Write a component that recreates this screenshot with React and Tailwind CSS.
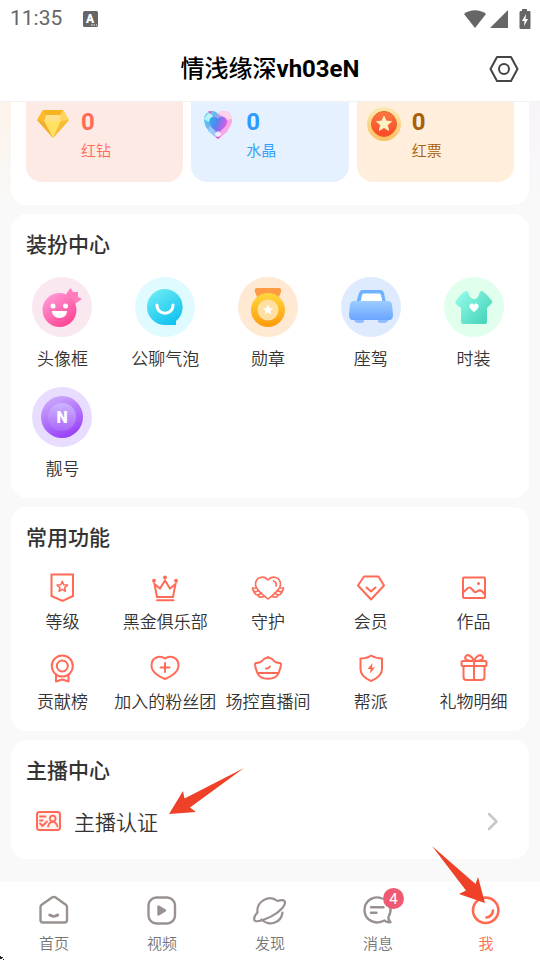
import { useState } from "react";

const STAR = "M0 -10L2.7 -3.7L9.5 -3.1L4.3 1.4L5.9 8.1L0 4.5L-5.9 8.1L-4.3 1.4L-9.5 -3.1L-2.7 -3.7Z";

function LineIcon({ children, width = 2 }) {
  return (
    <svg
      viewBox="0 0 32 32"
      className="h-8 w-8 overflow-visible"
      fill="none"
      stroke="currentColor"
      strokeWidth={width}
      strokeLinecap="round"
      strokeLinejoin="round"
      aria-hidden="true"
    >
      {children}
    </svg>
  );
}

const balances = [
  {
    label: "红钻",
    value: 0,
    style: "bg-[#feeae5] text-[#ff6b57]",
    icon: (
      <svg viewBox="0 0 36 36" className="h-9 w-9" aria-hidden="true">
        <path d="M8 4H28L34 14L18 32L2 14Z" fill="#fcc63a" />
        <path d="M8 4H28L25 9H11Z" fill="#f6b51e" />
        <path d="M11 9H25L26 15H9Z" fill="#ffe08a" />
        <path d="M9 15H26L18 32Z" fill="#ffe262" />
        <path d="M2 14L9 15L18 32Z" fill="#f2ae2c" />
        <path d="M34 14L26 15L18 32Z" fill="#f8bb35" />
        <path d="M8 4L11 9L9 15L2 14Z" fill="#fdbb2d" />
        <path d="M28 4L25 9L26 15L34 14Z" fill="#ffd35d" />
      </svg>
    ),
  },
  {
    label: "水晶",
    value: 0,
    style: "bg-[#e5f1fe] text-[#2b9cff]",
    icon: (
      <svg viewBox="0 0 36 36" className="h-9 w-9" aria-hidden="true">
        <defs>
          <linearGradient id="crystal" x1="0" y1="0" x2="1" y2="0.6">
            <stop offset="0" stopColor="#7fd8f5" />
            <stop offset="0.3" stopColor="#5bbcf2" />
            <stop offset="0.6" stopColor="#f08be6" />
            <stop offset="1" stopColor="#ffb8e4" />
          </linearGradient>
          <linearGradient id="crystalCore" x1="0" y1="0.2" x2="1" y2="0.5">
            <stop offset="0" stopColor="#28b4f0" />
            <stop offset="0.45" stopColor="#5f7df0" />
            <stop offset="1" stopColor="#ea58e6" />
          </linearGradient>
        </defs>
        <path d="M18 8C15 3 5 4 4 13C3.500 21 11 28 18 33C25 28 33 21 32 13C31 4 21 3 18 8Z" fill="url(#crystal)" />
        <path d="M18 8C21 3 31 4 32 13L26 14L22 10Z" fill="#ffd3ea" />
        <path d="M4 13L9 6L13 10L9 16Z" fill="#b9f2f5" />
        <path d="M18 13C16 9.500 9 10 9.500 16C10 21 15 24.500 18 27C21 24.500 26.500 21 27 16C27 10 20 9.500 18 13Z" fill="url(#crystalCore)" />
        <path d="M9.500 20L14 24L18 33L8 25Z" fill="#8fd0fa" />
        <path d="M27 20L22 24L18 33L28 25Z" fill="#f7a8ea" />
        <path d="M14.500 28L18 25L21.500 28L18 31.500Z" fill="#f2ecff" />
        <path d="M8 5.500L12 5L10 8Z" fill="#f64fc6" />
        <path d="M15.500 31L18 33L21 30.500Z" fill="#f64fc6" />
      </svg>
    ),
  },
  {
    label: "红票",
    value: 0,
    style: "bg-[#feeedb] text-[#a85f08]",
    icon: (
      <svg viewBox="0 0 36 36" className="h-9 w-9" aria-hidden="true">
        <defs>
          <linearGradient id="ticketRim" x1="0" y1="0" x2="0" y2="1">
            <stop offset="0" stopColor="#fdeab2" />
            <stop offset="1" stopColor="#fdc062" />
          </linearGradient>
          <linearGradient id="ticketFace" x1="0" y1="0" x2="0" y2="1">
            <stop offset="0" stopColor="#fd7a42" />
            <stop offset="1" stopColor="#fb4726" />
          </linearGradient>
        </defs>
        <circle cx="18" cy="18" r="17" fill="url(#ticketRim)" />
        <circle cx="18" cy="18" r="12.500" fill="url(#ticketFace)" stroke="#e8632a" />
        <path d={STAR} transform="translate(18 18) scale(0.8)" fill="#fff2c4" stroke="#fff2c4" strokeLinejoin="round" />
      </svg>
    ),
  },
];

const dressItems = [
  {
    label: "头像框",
    icon: (
      <>
        <defs>
          <linearGradient id="face" x1="0.1" y1="0" x2="0.8" y2="1">
            <stop offset="0" stopColor="#ff9fdd" />
            <stop offset="1" stopColor="#ff3f8e" />
          </linearGradient>
        </defs>
        <circle cx="30" cy="30" r="30" fill="#fae8f0" />
        <path d="M34 17L38.500 11L41 15L46 15L46 20L50 22L43 27Z" fill="#ff7dbd" />
        <circle cx="27.500" cy="33" r="17" fill="url(#face)" />
        <circle cx="21" cy="29" r="2.500" fill="#fff" />
        <circle cx="33.500" cy="29" r="2.500" fill="#fff" />
        <path d="M20 34H35C35 38 32 41 27.500 41C23 41 20 38 20 34Z" fill="#fff" />
      </>
    ),
  },
  {
    label: "公聊气泡",
    icon: (
      <>
        <defs>
          <linearGradient id="bubble" x1="0.2" y1="0" x2="0.8" y2="1">
            <stop offset="0" stopColor="#6cebf5" />
            <stop offset="1" stopColor="#0cc0f0" />
          </linearGradient>
        </defs>
        <circle cx="30" cy="30" r="30" fill="#dffbff" />
        <path d="M30 12A18 18 0 1 0 30 48H41V44A18 18 0 0 0 30 12Z" fill="url(#bubble)" />
        <path d="M22 28C22 39 38 39 38 28" fill="none" stroke="#fff" strokeWidth="3" strokeLinecap="round" />
      </>
    ),
  },
  {
    label: "勋章",
    icon: (
      <>
        <defs>
          <linearGradient id="medal" x1="0" y1="0" x2="0" y2="1">
            <stop offset="0" stopColor="#ffd83f" />
            <stop offset="1" stopColor="#ff9a0c" />
          </linearGradient>
        </defs>
        <circle cx="30" cy="30" r="30" fill="#ffe9d3" />
        <path d="M19 11H41C43 11 43.500 13 43 15L41 20H19L17 15C16.500 13 17 11 19 11Z" fill="#ff9a45" />
        <circle cx="30" cy="33" r="17" fill="url(#medal)" />
        <circle cx="30" cy="33" r="10.500" fill="#ffe0a0" />
        <path d={STAR} transform="translate(30 33) scale(0.55)" fill="#fff" />
      </>
    ),
  },
  {
    label: "座驾",
    icon: (
      <>
        <defs>
          <linearGradient id="car" x1="0" y1="0" x2="0" y2="1">
            <stop offset="0" stopColor="#9dccff" />
            <stop offset="1" stopColor="#6aa5ff" />
          </linearGradient>
        </defs>
        <circle cx="30" cy="30" r="30" fill="#deebff" />
        <path d="M13 41H23V44C23 46 21 46 18 46C15 46 13 45 13 41ZM37 41H48V42C47 45 45 46 42 46C39 46 37 46 37 44Z" fill="#92bcff" />
        <path d="M15 26L18 16C19 13.500 20 13 23 13H38C41 13 42 13.500 43 16L45 26Z" fill="#6fb2ff" />
        <path d="M19.500 25L21 18C21.500 17 22 16.500 23 16.500H38C39 16.500 39.500 17 40 18L41.500 25Z" fill="#fff" />
        <path d="M13 24H47C49.500 24 50.500 25 51 28L52 37C52 41 51 43 48 43H12C9 43 8 41 8 37L9 28C9.500 25 10.500 24 13 24Z" fill="url(#car)" />
      </>
    ),
  },
  {
    label: "时装",
    icon: (
      <>
        <defs>
          <linearGradient id="shirt" x1="0" y1="0.2" x2="1" y2="1">
            <stop offset="0" stopColor="#93fae8" />
            <stop offset="1" stopColor="#3ccfb4" />
          </linearGradient>
        </defs>
        <circle cx="30" cy="30" r="30" fill="#e1ffed" />
        <path d="M22 14C23 14 24 14.500 24.500 16C26 24 34 24 35.500 16C36 14.500 37 14 38 14C40 14.500 46 21 48 24C48.500 25 48 26 47 27L43 31V44C43 46 42.500 47 41 47H19C17.500 47 17 46 17 44V31L13 28C11 26.500 11 25 12 24C14 20 18 16 22 14Z" fill="url(#shirt)" />
        <path d="M30 28C28 25 25 27 25.500 30C26 32 28 33 30 35C32 33 34 32 34.500 30C35 27 32 25 30 28Z" fill="#fff" />
      </>
    ),
  },
  {
    label: "靓号",
    icon: (
      <>
        <defs>
          <linearGradient id="number" x1="0.3" y1="0" x2="0.7" y2="1">
            <stop offset="0" stopColor="#cba8fb" />
            <stop offset="1" stopColor="#963df9" />
          </linearGradient>
          <linearGradient id="numberFace" x1="0" y1="0" x2="0" y2="1">
            <stop offset="0" stopColor="#cdb4ff" />
            <stop offset="1" stopColor="#ab68f8" />
          </linearGradient>
        </defs>
        <circle cx="30" cy="30" r="30" fill="#e9ddff" />
        <circle cx="30" cy="30" r="21" fill="url(#number)" />
        <circle cx="30" cy="30" r="14" fill="url(#numberFace)" />
        <text x="30" y="36" textAnchor="middle" fill="#fff" className="text-base font-black">
          N
        </text>
      </>
    ),
  },
];

const tools = [
  {
    label: "等级",
    icon: (
      <LineIcon>
        <path d="M5.500 2.500H27V24L16.500 29L5.500 24Z" strokeLinejoin="miter" />
        <path d={STAR} transform="translate(16.3 14.8) scale(0.55)" strokeWidth="2.700" />
      </LineIcon>
    ),
  },
  {
    label: "黑金俱乐部",
    icon: (
      <LineIcon>
        <path d="M5.500 12L8 25H24L26.500 12L21 16.500L16 8.500L11 16.500Z" strokeLinejoin="miter" />
        <path d="M8 28.300H24.500" />
        <g fill="currentColor" stroke="none">
          <circle cx="5" cy="8.700" r="1.900" />
          <circle cx="16" cy="5.300" r="1.900" />
          <circle cx="27" cy="8.700" r="1.900" />
        </g>
      </LineIcon>
    ),
  },
  {
    label: "守护",
    icon: (
      <LineIcon width={1.6}>
        <path d="M16 8C12 3 3.500 5 3.500 12.500C3.500 18 11 23 16 27C21 23 28.500 18 28.500 12.500C28.500 5 20 3 16 8Z" />
        <path d="M21.500 9C23.500 9.500 24.800 11.500 24 14" />
        <path d="M4 16H0.500C0.500 18 1.500 19.500 3.500 20C2.500 20 2 20 2 20.500C3 22.500 4.500 23 6 23C5.500 24.500 8.500 26 12 24.500M3.500 20L7 18.500M6 23L9.500 21" />
        <path d="M28 16H31.500C31.500 18 30.500 19.500 28.500 20C29.500 20 30 20 30 20.500C29 22.500 27.500 23 26 23C26.500 24.500 23.500 26 20 24.500M28.500 20L25 18.500M26 23L22.500 21" />
      </LineIcon>
    ),
  },
  {
    label: "会员",
    icon: (
      <LineIcon>
        <path d="M9 4.500H23.500L29 13.500L16 27.500L3 13.500Z" />
        <path d="M11.500 15.500L16 19.500L20.500 15.500" />
      </LineIcon>
    ),
  },
  {
    label: "作品",
    icon: (
      <LineIcon>
        <rect x="5" y="5.500" width="22" height="20.500" rx="1" />
        <path d="M5.500 20L10 16C11 15.200 12 15.300 13 16.300L16 19.500C17 20.300 18 20.300 19 19.500C21 18 22.500 18 24 19.300L26.500 22" />
        <circle cx="20.500" cy="11.500" r="1.500" fill="currentColor" stroke="none" />
      </LineIcon>
    ),
  },
  {
    label: "贡献榜",
    icon: (
      <LineIcon>
        <circle cx="16.300" cy="14" r="10.500" />
        <circle cx="16.300" cy="14" r="5.500" />
        <path d="M10 23.500V29.500L16.300 27.500L22.500 29.500V23.500" />
      </LineIcon>
    ),
  },
  {
    label: "加入的粉丝团",
    icon: (
      <LineIcon>
        <path d="M16 6.500C11 3 2.500 5 2.500 13.500C2.500 19.500 9 24.500 16 27C23 24.500 29.500 19.500 29.500 13.500C29.500 5 21 3 16 6.500Z" />
        <path d="M11.500 15.500H20.500M16 11V20" />
      </LineIcon>
    ),
  },
  {
    label: "场控直播间",
    icon: (
      <LineIcon>
        <path d="M3.500 11C7 11.500 9.500 10 11.500 7.500C13 5.500 14.500 6.800 16 5C17.500 6.800 19 5.500 20.500 7.500C22.500 10 25 11.500 28.500 11C30 13.500 28 17 26.500 21C24 28.500 8 28.500 5.500 21C4 17 2 13.500 3.500 11Z" />
        <path d="M5.500 21H26.500M14 16.500C15 16.800 17 15.800 18 14.500" />
      </LineIcon>
    ),
  },
  {
    label: "帮派",
    icon: (
      <LineIcon>
        <path d="M16 3.500C12.500 6 9 6.500 5.500 6.500V17C5.500 23 10 26.500 16 29C22 26.500 27 23 27 17V6.500C23.500 6.500 20 6 16 3.500Z" />
        <path d="M17.500 11L12.500 17H15.500L15 21.500L20 15.500H17Z" fill="currentColor" stroke="none" />
      </LineIcon>
    ),
  },
  {
    label: "礼物明细",
    icon: (
      <LineIcon>
        <rect x="3.500" y="9" width="25" height="5" rx="1.500" />
        <path d="M5.500 14V25C5.500 27 6.500 28 8.500 28H23.500C25.500 28 26.500 27 26.500 25V14M16 9V28" />
        <path d="M16 9C9 9 6 7.500 7.500 4.500C9.500 1.500 14 4 16 9C18 4 22.500 1.500 24.500 4.500C26 7.500 23 9 16 9Z" />
      </LineIcon>
    ),
  },
];

const tabs = [
  {
    id: "home",
    label: "首页",
    icon: (
      <LineIcon width={2.4}>
        <path d="M14 3.500C15.200 2.700 16.500 2.700 17.700 3.500L27.500 10.500C28.500 11.200 29 12 29 13.200V26C29 27.500 28 28.500 26.500 28.500H5C3.500 28.500 2.500 27.500 2.500 26V13.200C2.500 12 3 11.200 4 10.500Z" />
        <path d="M11.800 21C14 22.600 17.500 22.600 19.700 21" strokeWidth="3" />
      </LineIcon>
    ),
  },
  {
    id: "video",
    label: "视频",
    icon: (
      <LineIcon width={2.4}>
        <rect x="2.500" y="3.500" width="26.500" height="26" rx="8" />
        <path d="M12.500 12.500V20.500L19 16.500Z" fill="currentColor" />
      </LineIcon>
    ),
  },
  {
    id: "discover",
    label: "发现",
    icon: (
      <LineIcon width={2.2}>
        <path d="M3.500 18.500A12.500 12.500 0 0 1 23.500 7C26 6.200 29 5.500 30.500 7C32.500 10.500 28 15 23 18.800C17 23 4 29.500 0.500 26.500C-0.500 24 1.500 20.500 3.500 18.500Z" />
        <path d="M7.500 25.500C15 32.500 27 29.500 28.500 18.500" />
      </LineIcon>
    ),
  },
  {
    id: "message",
    label: "消息",
    badge: 4,
    icon: (
      <LineIcon width={2.4}>
        <path d="M20 4.500C12 1 2.500 6.500 2.500 16C2.500 26 13 31.500 22.500 26.500C24 28 26 28.500 28.500 28C26.500 27 26.300 25 26.500 23C28 20.500 29 17.500 28.500 13" />
        <path d="M9 13.300H21.500M9 18.800H14.500" />
      </LineIcon>
    ),
  },
  {
    id: "me",
    label: "我",
    icon: (
      <LineIcon width={2.6}>
        <circle cx="15.700" cy="16.300" r="12.700" />
        <path d="M23 16.500C22.500 20.500 20 23 16.500 23.500" />
      </LineIcon>
    ),
  },
];

function StatusBar() {
  return (
    <div className="flex h-9 items-center pr-2 pl-[10px] text-[#666]">
      <span className="text-[21px]">11:35</span>
      <svg viewBox="0 0 16 16" className="ml-[21px] h-4 w-4" aria-hidden="true">
        <rect width="15" height="16" rx="1.500" fill="currentColor" />
        <text x="7" y="12" textAnchor="middle" fill="#fff" className="text-xs font-black">
          A
        </text>
        <path d="M8 14H9.500M10.500 14H12M13 14H14" stroke="#fff" strokeWidth="1.200" />
      </svg>
      <div className="ml-auto flex items-center gap-1">
        <svg viewBox="0 0 22 18" className="h-[18px] w-[22px]" fill="currentColor" aria-hidden="true">
          <path d="M0 4C6 -1 16 -1 22 4L11 18Z" />
        </svg>
        <svg viewBox="0 0 18 18" className="h-[18px] w-[18px]" fill="currentColor" aria-hidden="true">
          <path d="M18 0V18H0Z" />
        </svg>
        <svg viewBox="0 0 20 20" className="h-5 w-5" aria-hidden="true">
          <path d="M10 0H15V2H17C18 2 18.500 2.500 18.500 3.500V18.500C18.500 19.500 18 20 17 20H9C8 20 7.500 19.500 7.500 18.500V3.500C7.500 2.500 8 2 9 2H10Z" fill="currentColor" />
          <path d="M14 5L10 12H12.500L12 17L16 10H13.500Z" fill="#fff" />
        </svg>
      </div>
    </div>
  );
}

function Section({ title, className = "", children }) {
  return (
    <section className={`mx-[11px] rounded-2xl bg-white pt-[17px] ${className}`}>
      <h2 className="pl-[15px] text-[21px] leading-7 font-medium text-[#333]">{title}</h2>
      {children}
    </section>
  );
}

export default function App() {
  const [tab, setTab] = useState("me");

  return (
    <div className="relative flex min-h-screen flex-col bg-[#f9f9f9] font-['Roboto','Noto_Sans_CJK_SC',sans-serif] text-[#333]">
      <header className="border-b border-[#f1f1f1] bg-white pt-px">
        <StatusBar />
        <div className="grid h-16 grid-cols-[1fr_auto_1fr] items-center px-5">
          <h1 className="col-start-2 text-2xl font-medium text-black">
            情浅缘深<span className="font-bold">vh03eN</span>
          </h1>
          <button type="button" aria-label="设置" className="justify-self-end text-[#444]">
            <LineIcon>
              <path d="M9 4H23L29.500 16L23 28H9L2.500 16Z" />
              <circle cx="16" cy="16" r="5" />
            </LineIcon>
          </button>
        </div>
      </header>

      <main className="flex flex-1 flex-col gap-[9px] pb-[23px]">
        <div className="bg-linear-to-r from-[#fcf3ea] to-[#f8f4fa]">
          <div className="bg-linear-to-b from-transparent to-[#f9f9f9] px-[11px]">
            <section className="grid grid-cols-3 gap-2 rounded-b-2xl bg-white px-[15px] pb-[23px]">
              {balances.map((item) => (
                <div key={item.label} className={`flex h-20 gap-[10px] rounded-b-2xl pt-1 pl-[9px] ${item.style}`}>
                  {item.icon}
                  <div>
                    <p className="text-2xl leading-8 font-bold">{item.value}</p>
                    <p className="text-[15px] leading-[26px] font-[350]">{item.label}</p>
                  </div>
                </div>
              ))}
            </section>
          </div>
        </div>

        <Section title="装扮中心" className="pb-[15px]">
          <div className="mt-[18px] mr-1 grid grid-cols-5 gap-y-[14px]">
            {dressItems.map((item) => (
              <button key={item.label} type="button" className="flex flex-col items-center gap-2">
                <svg viewBox="0 0 60 60" className="h-15 w-15" aria-hidden="true">
                  {item.icon}
                </svg>
                <span className="text-[17px] leading-7 font-[350] whitespace-nowrap">{item.label}</span>
              </button>
            ))}
          </div>
        </Section>

        <Section title="常用功能" className="pb-[15px]">
          <div className="mt-5 mr-1 grid grid-cols-5 gap-y-4">
            {tools.map((item) => (
              <button key={item.label} type="button" className="flex flex-col items-center gap-1">
                <span className="text-[#ff6b57]">{item.icon}</span>
                <span className="text-[17px] leading-7 font-[350] whitespace-nowrap">{item.label}</span>
              </button>
            ))}
          </div>
        </Section>

        <Section title="主播中心" className="relative pb-4">
          <button type="button" className="mt-4 flex h-[42px] w-full items-center pr-6 pl-[21px]">
            <span className="text-[#ff6b57]">
              <LineIcon>
                <rect x="5" y="6" width="23" height="18" rx="2.500" fill="#fff1ee" />
                <path d="M8 10.500H13.500M8 14.500H10.500M8 17.500L10.500 20L15 15.500" strokeWidth="1.800" />
                <circle cx="20.700" cy="12.500" r="2.800" strokeWidth="1.800" />
                <path d="M16 20.500C17 17 19 15.800 20.700 15.800C22.500 15.800 24.500 17 25.500 20.500" strokeWidth="1.800" />
              </LineIcon>
            </span>
            <span className="ml-[10px] pt-1 text-[21px] font-[350]">主播认证</span>
            <svg
              viewBox="0 0 24 24"
              className="ml-auto h-6 w-6"
              fill="none"
              stroke="#c8c8c8"
              strokeWidth="2.500"
              strokeLinecap="round"
              strokeLinejoin="round"
              aria-hidden="true"
            >
              <path d="M8 4L15.500 11.500L8 19" />
            </svg>
          </button>
          <svg viewBox="168 766 78 50" className="pointer-events-none absolute top-[26px] left-[157px] h-[50px] w-[78px]" aria-hidden="true">
            <path d="M169 814L183 791L184.500 798.500L244 768L190 807.500L196 812Z" fill="#ee4128" />
          </svg>
        </Section>
      </main>

      <nav className="grid grid-cols-5 bg-white pt-3 pb-[6px]">
        {tabs.map((item) => (
          <button
            key={item.id}
            type="button"
            onClick={() => setTab(item.id)}
            className={`relative flex flex-col items-center gap-2 ${tab === item.id ? "text-[#ff6b50]" : "text-[#999190]"}`}
          >
            {item.icon}
            <span className={`text-[15px] leading-5 font-[350] ${tab === item.id ? "" : "text-[#757575]"}`}>{item.label}</span>
            {item.badge && (
              <span className="absolute -top-[6px] left-1/2 ml-[5px] grid h-[21px] w-[21px] place-items-center rounded-full bg-[#ee5a72] text-[15px] leading-5 text-white">
                {item.badge}
              </span>
            )}
            {item.id === "me" && (
              <svg viewBox="430 844 58 62" className="pointer-events-none absolute -top-[50px] left-1/2 -ml-14 h-[62px] w-[58px]" aria-hidden="true">
                <path d="M432 846L475.500 884L478 877L485 903L459 894L466 890.500Z" fill="#ee4128" />
              </svg>
            )}
          </button>
        ))}
      </nav>

      <svg viewBox="0 0 4 4" className="absolute bottom-0 left-0 h-1 w-1" aria-hidden="true">
        <path d="M0 0H1V1H3V2H2V3H4V4H3V3H0Z" fill="#222" />
      </svg>
    </div>
  );
}
